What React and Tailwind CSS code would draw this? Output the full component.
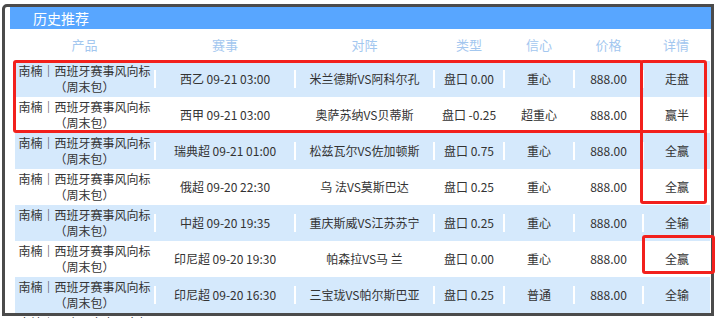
const rows = [
  ['西乙 09-21 03:00', '米兰德斯VS阿科尔孔', '盘口 0.00', '重心', '888.00', '走盘'],
  ['西甲 09-21 03:00', '奥萨苏纳VS贝蒂斯', '盘口 -0.25', '超重心', '888.00', '赢半'],
  ['瑞典超 09-21 01:00', '松兹瓦尔VS佐加顿斯', '盘口 0.75', '重心', '888.00', '全赢'],
  ['俄超 09-20 22:30', '乌 法VS莫斯巴达', '盘口 0.25', '重心', '888.00', '全赢'],
  ['中超 09-20 19:35', '重庆斯威VS江苏苏宁', '盘口 0.25', '重心', '888.00', '全输'],
  ['印尼超 09-20 19:30', '帕森拉VS马 兰', '盘口 0.00', '重心', '888.00', '全赢'],
  ['印尼超 09-20 16:30', '三宝珑VS帕尔斯巴亚', '盘口 0.25', '普通', '888.00', '全输'],
  ['印尼超 09-20 14:00', '巴厘联VS泗水', '盘口 0.50', '重心', '888.00', '全赢'],
];

const heads = ['产品', '赛事', '对阵', '类型', '信心', '价格', '详情'];

const grid = 'grid grid-cols-[141px_140px_139px_70px_70px_69px_1fr]';

function Cell({ children, sep = true }) {
  return (
    <div className="flex items-center h-full">
      <div className="flex-1 text-center">{children}</div>
      {sep ? <div className="w-[2px] h-[18px] bg-white" /> : null}
    </div>
  );
}

function Row({ r, blue }) {
  return (
    <div className={`${grid} h-[36px] text-[12px] leading-[16px] text-[#333] ${blue ? 'bg-[#d5e9fc]' : 'bg-white'}`}>
      <Cell>
        <div>南楠｜西班牙赛事风向标</div>
        <div>（周末包）</div>
      </Cell>
      {r.map((v, i) => (
        <Cell key={i} sep={i < 5}>
          {v}
        </Cell>
      ))}
    </div>
  );
}

export default function App() {
  return (
    <div className="relative w-[715px] h-[318px] overflow-hidden bg-white font-['Noto_Sans_CJK_SC',sans-serif]">
      <div className="pt-[7px] pl-[10px] pr-[4px]">
        <div className="h-[22px] bg-[#58a6ff] pl-[23px] text-[14px] leading-[22px] text-white">历史推荐</div>
        <div className="ml-[5px] mr-[1px]">
          <div className={`${grid} h-[32px] text-[13px] text-[#a3c7ef]`}>
            {heads.map((h) => (
              <div key={h} className="flex items-center justify-center pr-[2px]">
                {h}
              </div>
            ))}
          </div>
          {rows.map((r, i) => (
            <Row key={i} r={r} blue={i % 2 === 0} />
          ))}
        </div>
      </div>

      {/* window frame */}
      <div className="pointer-events-none absolute left-[2px] top-[4px] w-[712px] h-[312px] border-[3px] border-[#4b4b4b] rounded-tl-[5px]" />

      {/* red annotation boxes */}
      <div className="pointer-events-none absolute left-[13px] top-[60px] w-[630px] h-[73px] border-[3px] border-[#f2201c] rounded-[3px]" />
      <div className="pointer-events-none absolute left-[640px] top-[60px] w-[67px] h-[73px] border-[3px] border-[#f2201c] rounded-[3px]" />
      <div className="pointer-events-none absolute left-[640px] top-[130px] w-[67px] h-[74px] border-[3px] border-[#f2201c] rounded-[3px]" />
      <div className="pointer-events-none absolute left-[642px] top-[235px] w-[73px] h-[39px] border-[3px] border-[#f2201c] rounded-[3px]" />
    </div>
  );
}
